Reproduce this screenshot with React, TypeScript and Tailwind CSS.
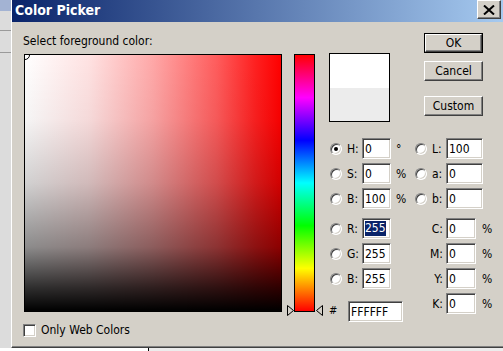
const sunken =
  "border border-t-[#808080] border-l-[#808080] border-r-white border-b-white shadow-[inset_1px_1px_0_#404040,inset_-1px_-1px_0_#d4d0c8] bg-white";
const raised =
  "border border-t-white border-l-white border-r-[#404040] border-b-[#404040] shadow-[inset_-1px_-1px_0_#808080,inset_1px_1px_0_#d4d0c8] bg-[#d4d0c8]";

function Radio({ checked = false }: { checked?: boolean }) {
  return (
    <div
      className={`relative flex h-[12px] w-[12px] shrink-0 items-center justify-center rounded-full ${sunken}`}
    >
      {checked && <div className="h-[4px] w-[4px] rounded-full bg-black" />}
    </div>
  );
}

function Field({ value, w, selected = false }: { value: string; w: string; selected?: boolean }) {
  return (
    <div className={`flex h-[21px] shrink-0 items-center pl-[2px] ${w} ${sunken}`}>
      {selected ? <span className="bg-[#0a246a] leading-[15px] text-white">{value}</span> : value}
    </div>
  );
}

function LeftRow({
  label,
  value,
  unit,
  checked,
  selected,
  className = "",
}: {
  label: string;
  value: string;
  unit?: string;
  checked?: boolean;
  selected?: boolean;
  className?: string;
}) {
  return (
    <div className={`flex h-[21px] items-center ${className}`}>
      <div className="flex w-[33px] items-center">
        <div className="ml-[1px]">
          <Radio checked={checked} />
        </div>
        <span className="ml-[5px]">{label}</span>
      </div>
      <Field value={value} w="w-[29px]" selected={selected} />
      {unit && <span className="ml-[5px]">{unit}</span>}
    </div>
  );
}

function RightRow({
  label,
  value,
  radio,
  className = "",
}: {
  label: string;
  value: string;
  radio?: boolean;
  className?: string;
}) {
  return (
    <div className={`flex h-[21px] items-center ${className}`}>
      {radio ? (
        <>
          <div className="flex w-[31px] items-center">
            <Radio />
            <span className="ml-[5px]">{label}</span>
          </div>
          <Field value={value} w="w-[37px]" />
        </>
      ) : (
        <>
          <div className="w-[29px] pr-[1px] text-right">{label}</div>
          <div className="ml-[2px]">
            <Field value={value} w="w-[30px]" />
          </div>
          <span className="ml-[6px]">%</span>
        </>
      )}
    </div>
  );
}

function Button({ children, isDefault = false }: { children: string; isDefault?: boolean }) {
  if (isDefault) {
    return (
      <div className="h-[20px] w-[59px] border border-black">
        <div className={`flex h-full w-full items-center justify-center ${raised}`}>{children}</div>
      </div>
    );
  }
  return <div className={`flex h-[20px] w-[59px] items-center justify-center ${raised}`}>{children}</div>;
}

export default function App() {
  return (
    <div className="flex h-[351px] w-[503px] flex-col overflow-hidden bg-white font-['DejaVu_Sans_Condensed','DejaVu_Sans',sans-serif] text-[12px] text-black">
      <div className="flex h-[348px]">
        {/* window behind */}
        <div className="flex w-[11px] shrink-0 flex-col bg-[#dcdcdc]">
          <div className="h-[11px] bg-[#a3b3d3]" />
          <div className="mt-[19px] h-px bg-[#9a9a9a]" />
          <div className="mt-[21px] h-px bg-[#9a9a9a]" />
        </div>

        {/* dialog */}
        <div className="flex flex-1 flex-col border-b border-l border-b-[#404040] border-l-white bg-[#d4d0c8] shadow-[inset_0_-1px_0_#808080]">
          <div className="flex h-[22px] shrink-0 items-start bg-[linear-gradient(to_right,#0a246a,#a6caf0)]">
            <span className="mt-[2px] ml-[3px] text-[14px] leading-[16px] font-bold text-white">Color Picker</span>
            <div className={`ml-auto mr-[2px] flex h-[19px] w-[24px] items-center justify-center ${raised}`}>
              <svg width="12" height="10" viewBox="0 0 12 10">
                <path d="M1 0.5 L11 9.5 M11 0.5 L1 9.5" stroke="black" strokeWidth="2" />
              </svg>
            </div>
          </div>

          <div className="flex flex-1 pt-[11px] pl-[11px]">
            {/* field column */}
            <div className="flex w-[259px] flex-col">
              <div className="h-[21px] leading-[16px]">Select foreground color:</div>
              <div className="relative ml-[1px] h-[258px] w-[258px] overflow-hidden border border-black bg-[linear-gradient(to_bottom,rgba(0,0,0,0)_0%,rgba(0,0,0,0.04)_25%,rgba(0,0,0,0.18)_50%,rgba(0,0,0,0.45)_75%,rgba(0,0,0,0.82)_91%,#000_100%),linear-gradient(to_right,#fff_0%,#ffe2e2_25%,#ffa8a8_50%,#ff5c5c_75%,#ff2020_90%,#f00_100%)]">
                <div className="absolute -top-[5px] -left-[5px] h-[10px] w-[10px] rounded-full border border-black" />
              </div>
              <div className="mt-[9px] flex items-center">
                <div className={`h-[13px] w-[13px] ${sunken}`} />
                <span className="ml-[5px]">Only Web Colors</span>
              </div>
            </div>

            {/* hue column */}
            <div className="relative ml-[5px] w-[35px]">
              <div className="mt-[21px] ml-[7px] h-[258px] w-[21px] border border-black bg-[linear-gradient(to_bottom,#f00,#f0f,#00f,#0ff,#0f0,#ff0,#f00)]" />
              <svg className="absolute top-[272px] left-0" width="7" height="11" viewBox="0 0 7 11">
                <path d="M0.5 0.5 L6.5 5.5 L0.5 10.5 Z" fill="none" stroke="black" strokeWidth="1" />
              </svg>
              <svg className="absolute top-[272px] left-[29px]" width="7" height="11" viewBox="0 0 7 11">
                <path d="M6.5 0.5 L0.5 5.5 L6.5 10.5 Z" fill="none" stroke="black" strokeWidth="1" />
              </svg>
            </div>

            {/* values */}
            <div className="ml-[7px] flex flex-col">
              <div className="flex h-[89px]">
                <div className="mt-[20px] flex h-[69px] w-[61px] flex-col border border-black">
                  <div className="flex-1 bg-white" />
                  <div className="flex-1 bg-[#ececec]" />
                </div>
                <div className="ml-[34px] flex flex-col">
                  <Button isDefault>OK</Button>
                  <div className="mt-[8px]">
                    <Button>Cancel</Button>
                  </div>
                  <div className="mt-[15px]">
                    <Button>Custom</Button>
                  </div>
                </div>
              </div>

              <div className="mt-[16px] flex">
                <div className="flex w-[86px] flex-col">
                  <LeftRow label="H:" value="0" unit="°" checked />
                  <LeftRow label="S:" value="0" unit="%" className="mt-[4px]" />
                  <LeftRow label="B:" value="100" unit="%" className="mt-[4px]" />
                  <LeftRow label="R:" value="255" selected className="mt-[9px]" />
                  <LeftRow label="G:" value="255" className="mt-[4px]" />
                  <LeftRow label="B:" value="255" className="mt-[4px]" />
                  <div className="mt-[12px] flex h-[21px] items-center">
                    <span className="w-[19px] text-[11px]">#</span>
                    <Field value="FFFFFF" w="w-[55px]" />
                  </div>
                </div>
                <div className="flex flex-col">
                  <RightRow label="L:" value="100" radio />
                  <RightRow label="a:" value="0" radio className="mt-[4px]" />
                  <RightRow label="b:" value="0" radio className="mt-[4px]" />
                  <RightRow label="C:" value="0" className="mt-[9px]" />
                  <RightRow label="M:" value="0" className="mt-[4px]" />
                  <RightRow label="Y:" value="0" className="mt-[4px]" />
                  <RightRow label="K:" value="0" className="mt-[4px]" />
                </div>
              </div>
            </div>
          </div>
        </div>
      </div>
      <div className="flex h-[3px]">
        <div className="w-[148px] bg-white" />
        <div className="w-px bg-black" />
        <div className="flex-1 bg-[#ececec]" />
      </div>
    </div>
  );
}
